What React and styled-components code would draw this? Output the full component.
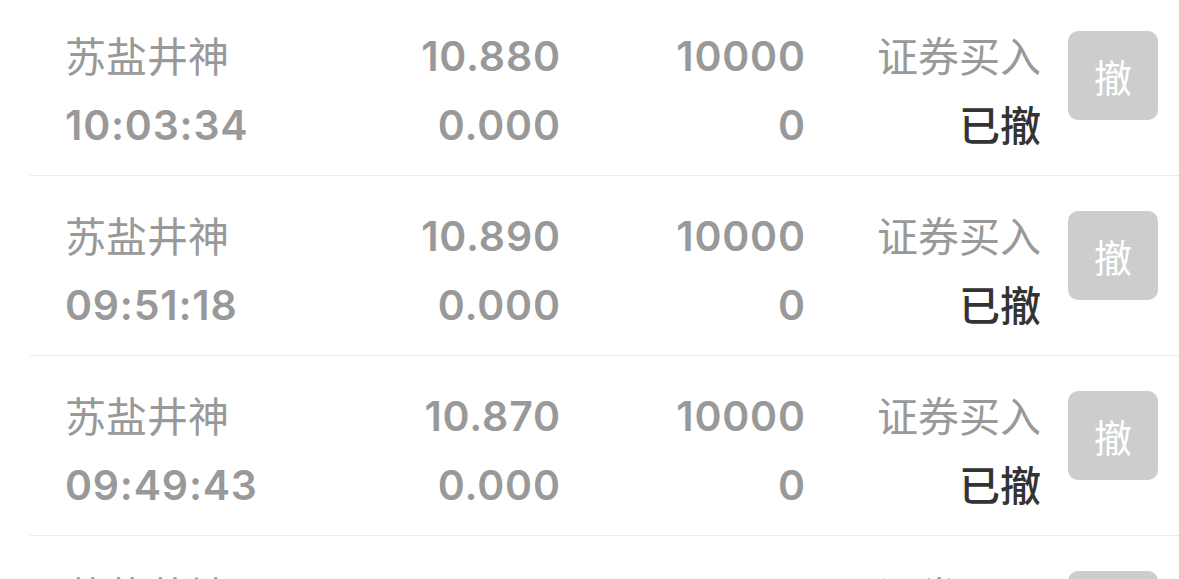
import React from 'react'
import styled, { createGlobalStyle } from 'styled-components'

const GlobalStyle = createGlobalStyle`
  html, body {
    margin: 0;
    padding: 0;
    background: #fff;
    overflow: hidden;
  }
  body {
    font-family: Inter, "Noto Sans CJK SC", sans-serif;
  }
`

const orders = [
  { name: '苏盐井神', time: '10:03:34', price: '10.880', dealPrice: '0.000', qty: '10000', dealQty: '0', type: '证券买入', status: '已撤' },
  { name: '苏盐井神', time: '09:51:18', price: '10.890', dealPrice: '0.000', qty: '10000', dealQty: '0', type: '证券买入', status: '已撤' },
  { name: '苏盐井神', time: '09:49:43', price: '10.870', dealPrice: '0.000', qty: '10000', dealQty: '0', type: '证券买入', status: '已撤' },
  { name: '苏盐井神', time: '09:45:02', price: '10.860', dealPrice: '0.000', qty: '10000', dealQty: '0', type: '证券买入', status: '已撤' },
]

const App = () => {
  return (
    <>
      <GlobalStyle />
      <List>
        {orders.map((o, i) => (
          <Row key={i}>
            <Cell>
              <Line>{o.name}</Line>
              <Line $num>{o.time}</Line>
            </Cell>
            <Cell $right>
              <Line $num>{o.price}</Line>
              <Line $num>{o.dealPrice}</Line>
            </Cell>
            <Cell $right>
              <Line $num>{o.qty}</Line>
              <Line $num>{o.dealQty}</Line>
            </Cell>
            <Cell $right>
              <Line>{o.type}</Line>
              <Line $dark>{o.status}</Line>
            </Cell>
            <CancelButton disabled>撤</CancelButton>
          </Row>
        ))}
      </List>
    </>
  )
}

const List = styled.div`
  margin-top: -4px;
`
const Row = styled.div`
  display: grid;
  grid-template-columns: 250px 245px 245px 236px 1fr;
  margin-left: 30px;
  padding: 26px 21px 15px 35px;
  border-bottom: 1px solid #ececec;
`
const Cell = styled.div`
  display: flex;
  flex-direction: column;
  align-items: ${({ $right }) => ($right ? 'flex-end' : 'flex-start')};
`
const Line = styled.div`
  height: 69px;
  line-height: 69px;
  font-family: ${({ $num }) => ($num ? 'Inter, sans-serif' : '"Noto Sans CJK SC", sans-serif')};
  font-size: 41px;
  letter-spacing: ${({ $num }) => ($num ? '0.8px' : '0')};
  margin-right: ${({ $num }) => ($num ? '-0.8px' : '0')};
  margin-top: ${({ $num }) => ($num ? '0' : '-2px')};
  margin-bottom: ${({ $num }) => ($num ? '0' : '2px')};
  font-weight: ${({ $num, $dark }) => ($num ? 600 : $dark ? 500 : 400)};
  color: ${({ $dark }) => ($dark ? '#333' : '#999')};
  white-space: nowrap;
`
const CancelButton = styled.button`
  justify-self: end;
  margin-top: 9px;
  width: 90px;
  height: 89px;
  border: none;
  border-radius: 10px;
  background: #cdcdcd;
  color: #fff;
  font-family: "Noto Sans CJK SC", sans-serif;
  font-size: 38px;
  padding: 0;
`

export default App
